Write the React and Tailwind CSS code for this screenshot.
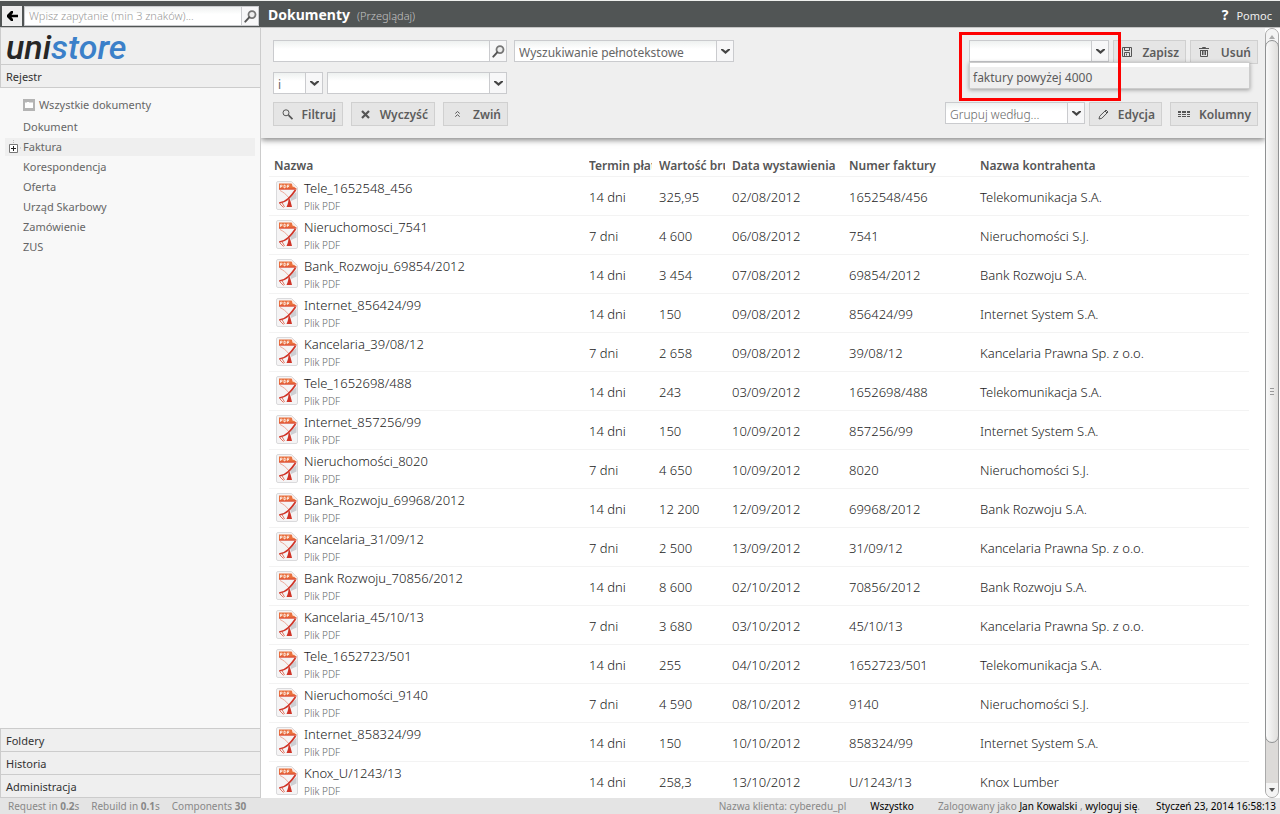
import React from "react";
import clsx from "clsx";

const documents = [
  ["Tele_1652548_456", "14 dni", "325,95", "02/08/2012", "1652548/456", "Telekomunikacja S.A."],
  ["Nieruchomosci_7541", "7 dni", "4 600", "06/08/2012", "7541", "Nieruchomości S.J."],
  ["Bank_Rozwoju_69854/2012", "14 dni", "3 454", "07/08/2012", "69854/2012", "Bank Rozwoju S.A."],
  ["Internet_856424/99", "14 dni", "150", "09/08/2012", "856424/99", "Internet System S.A."],
  ["Kancelaria_39/08/12", "7 dni", "2 658", "09/08/2012", "39/08/12", "Kancelaria Prawna Sp. z o.o."],
  ["Tele_1652698/488", "14 dni", "243", "03/09/2012", "1652698/488", "Telekomunikacja S.A."],
  ["Internet_857256/99", "14 dni", "150", "10/09/2012", "857256/99", "Internet System S.A."],
  ["Nieruchomości_8020", "7 dni", "4 650", "10/09/2012", "8020", "Nieruchomości S.J."],
  ["Bank_Rozwoju_69968/2012", "14 dni", "12 200", "12/09/2012", "69968/2012", "Bank Rozwoju S.A."],
  ["Kancelaria_31/09/12", "7 dni", "2 500", "13/09/2012", "31/09/12", "Kancelaria Prawna Sp. z o.o."],
  ["Bank Rozwoju_70856/2012", "14 dni", "8 600", "02/10/2012", "70856/2012", "Bank Rozwoju S.A."],
  ["Kancelaria_45/10/13", "7 dni", "3 680", "03/10/2012", "45/10/13", "Kancelaria Prawna Sp. z o.o."],
  ["Tele_1652723/501", "14 dni", "255", "04/10/2012", "1652723/501", "Telekomunikacja S.A."],
  ["Nieruchomości_9140", "7 dni", "4 590", "08/10/2012", "9140", "Nieruchomości S.J."],
  ["Internet_858324/99", "14 dni", "150", "10/10/2012", "858324/99", "Internet System S.A."],
  ["Knox_U/1243/13", "14 dni", "258,3", "13/10/2012", "U/1243/13", "Knox Lumber"],
];

const columns = [
  { label: "Nazwa", width: "w-[315px]" },
  { label: "Termin płatności", width: "w-[70px]" },
  { label: "Wartość brutto", width: "w-[73px]" },
  { label: "Data wystawienia", width: "w-[117px]" },
  { label: "Numer faktury", width: "w-[131px]" },
  { label: "Nazwa kontrahenta", width: "" },
];

const registers = ["Dokument", "Faktura", "Korespondencja", "Oferta", "Urząd Skarbowy", "Zamówienie", "ZUS"];

const Magnifier = () => (
  <svg width="13" height="13" viewBox="0 0 13 13" fill="none" aria-hidden="true">
    <circle cx="8" cy="4.6" r="3.5" fill="#eee" stroke="#777" strokeWidth="1.8" />
    <path d="M5.2 7.4 1.3 11.6" stroke="#555" strokeWidth="2" strokeLinecap="round" />
  </svg>
);

const Chevron = () => (
  <svg width="9" height="5" viewBox="0 0 9 5" aria-hidden="true">
    <path d="M0 0h2l2.5 2L7 0h2v1L4.500 5 0 1z" fill="#444" />
  </svg>
);

const FilterIcon = () => (
  <svg width="11" height="11" viewBox="0 0 11 11" fill="none" stroke="#555" aria-hidden="true">
    <circle cx="4" cy="3.8" r="3" />
    <path d="m6.5 6.2 4 4" strokeWidth="1.8" />
  </svg>
);

const ClearIcon = () => (
  <svg width="9" height="9" viewBox="0 0 9 9" stroke="#555" strokeWidth="2.2" aria-hidden="true">
    <path d="m1 1 7 7M8 1 1 8" />
  </svg>
);

const CollapseIcon = () => (
  <svg width="5" height="6" viewBox="0 0 5 6" fill="none" stroke="#555" aria-hidden="true">
    <path d="m.3 2.500 2.200-2 2.200 2M.3 5.700l2.200-2 2.200 2" />
  </svg>
);

const SaveIcon = () => (
  <svg width="10" height="10" viewBox="0 0 10 10" fill="none" stroke="#555" aria-hidden="true">
    <path d="M.5.5h9v9h-9zM2.5.5v3h5v-3M2.5 9.5v-4h5v4M4.5 6.5v2" />
  </svg>
);

const TrashIcon = () => (
  <svg width="10" height="10" viewBox="0 0 10 10" fill="none" stroke="#555" aria-hidden="true">
    <path d="M0 1.5h10M1.5 3.500h7M1.5 3v6.500h7V3M3.5 1V.5h3V1M3.500 4v4M5 4v4M6.500 4v4" />
  </svg>
);

const PencilIcon = () => (
  <svg width="11" height="11" viewBox="0 0 11 11" fill="none" stroke="#555" aria-hidden="true">
    <path d="m1 10 .7-2.800L8 1l2 2-6.200 6.300zM7 2l2 2" />
  </svg>
);

const ColumnsIcon = () => (
  <svg width="12" height="6" viewBox="0 0 12 6" fill="#555" aria-hidden="true">
    <path d="M0 0h3v2H0zM4 0h4v2H4zM9 0h3v2H9zM0 3h3v1H0zM4 3h4v1H4zM9 3h3v1H9zM0 5h3v1H0zM4 5h4v1H4zM9 5h3v1H9z" />
  </svg>
);

const PdfIcon = () => (
  <svg width="22" height="29" viewBox="0 0 22 29" className="shrink-0" aria-hidden="true">
    <path d="M2 .5h13.500l6 6V27a1.500 1.500 0 0 1-1.500 1.500H2A1.500 1.500 0 0 1 .5 27V2A1.500 1.500 0 0 1 2 .5z" fill="#f5f4f5" stroke="#dadadc" />
    <path d="M20.500 11v6.500L15 20l-1-4z" fill="#cdced2" />
    <path d="M3 2.500h12.500l5 5.500H3z" fill="#e9713f" />
    <path d="M3 7.500h17.500v1.200H3z" fill="#dd4a32" />
    <path d="M15.500 1l5.500 6-4.500-1.500z" fill="#fbe9e2" />
    <path d="M4.500 6.800V4.200h1.400q1 .7 0 1.400H4.800M8 4.200v2.600h1q1.600-1.300 0-2.600zM13.300 4.200h-1.900v2.600M11.500 5.500h1.500" fill="none" stroke="#fff" strokeWidth=".8" />
    <path d="M4 9.500c3 1.500 6 3.500 9 7.500" fill="none" stroke="#eda595" strokeWidth="1" />
    <path d="M19.500 9C17.500 12 15 15 12.500 17.500 10 20 6.500 21.500 3.200 22" fill="none" stroke="#d03427" strokeWidth="1.700" />
    <path d="M12.500 16.500c2 2 2.500 6 3.500 9.500h-5.500c1.500-3 2.200-6 2-9.500z" fill="#d03427" />
    <path d="M3.500 22.500l4 4M6 21.500l2.500 4.500" fill="none" stroke="#e2725f" strokeWidth="1" />
  </svg>
);

const FolderIcon = () => (
  <svg width="12" height="12" viewBox="0 0 12 12" aria-hidden="true">
    <path d="M0 0h12v12H0z" fill="#b4b4b4" />
    <path d="M2 3.500h2V3h2v.5h4V9H2z" fill="#fff" />
  </svg>
);

const fieldStyle =
  "w-full appearance-none rounded-none border border-[#cacbce] bg-white bg-linear-to-b from-[#eef1f0] to-white to-40% px-1 text-[#666] placeholder:text-[#999] outline-none";

const endCap =
  "absolute inset-y-0 right-0 flex w-[18px] items-center justify-center border border-[#cacbce] bg-[#f7f7f8]";

const SelectBox = ({ label, className, muted, options }) => (
  <div className={clsx("relative", className)}>
    <select aria-label={label} className={clsx(fieldStyle, "block h-[22px] pt-[3px]", muted && "font-light")}>
      {options.map((option) => (
        <option key={option}>{option}</option>
      ))}
    </select>
    <span className={clsx(endCap, "pointer-events-none h-[22px]")}>
      <Chevron />
    </span>
  </div>
);

const ToolButton = ({ icon, children, className }) => (
  <button
    type="button"
    className={clsx(
      "flex h-6 items-center justify-between border border-[#d0d0d0] bg-[#e5e5e5] pt-0.5 pr-1.5 pl-[7px] font-semibold text-[#5c5c5c]",
      className
    )}
  >
    <span className="flex w-3 justify-center pb-0.5">{icon}</span>
    {children}
  </button>
);

const Header = () => (
  <header className="flex h-7 shrink-0 items-center border-t border-b border-t-[#eef0ee] border-b-[#c4c4c4] bg-[#515555] pt-0.5">
    <div className="flex w-[261px] items-center gap-0.5 px-0.5 pt-0.5">
      <button type="button" aria-label="Wstecz" className="flex h-5 w-5 shrink-0 items-center justify-center bg-[#eee]">
        <svg width="11" height="10" viewBox="0 0 11 10" aria-hidden="true">
          <path d="M4 0h2v2L4.500 3.700H11v2.600H4.500L6 8v2H4L0 6V4z" fill="#000" />
        </svg>
      </button>
      <div className="relative grow">
        <input
          type="text"
          aria-label="Szukaj"
          placeholder="Wpisz zapytanie (min 3 znaków)..."
          className={clsx(fieldStyle, "block h-5 text-[11px] font-light placeholder:text-[#777]")}
        />
        <button type="button" aria-label="Szukaj" className={endCap}>
          <Magnifier />
        </button>
      </div>
    </div>
    <h1 className="pl-[7px] text-sm font-bold text-white">Dokumenty</h1>
    <span className="grow pt-0.5 pl-[7px] text-[11px] font-light text-[#c4c4c4]">(Przeglądaj)</span>
    <a href="#pomoc" className="flex items-center gap-2 pt-0.5 pr-2 text-[11px] text-[#eee]">
      <b className="pb-0.5 text-sm text-white">?</b>
      Pomoc
    </a>
  </header>
);

const Section = ({ children }) => (
  <button type="button" className="h-[23px] shrink-0 border-b border-l border-[#ccc] bg-[#efefef] pt-0.5 pl-[5px] text-left text-[11px] text-[#333]">
    {children}
  </button>
);

const Sidebar = () => (
  <aside className="flex w-[261px] shrink-0 flex-col border-r border-[#ccc] bg-[#f8f8f8]">
    <div className="flex h-[37px] shrink-0 items-center border-b border-l border-[#ccc] bg-[#efefef] pt-0.5 pl-[5px] font-['Roboto'] text-[34px] leading-9 font-medium text-[#262626] italic">
      uni<span className="text-[#3b80c9]">store</span>
    </div>
    <Section>Rejestr</Section>
    <nav className="grow px-[5px] pt-[7px] text-[11px] text-[#666]">
      <a href="#wszystkie" className="flex h-[22px] items-center gap-1 pb-0.5 pl-[18px]">
        <FolderIcon />
        Wszystkie dokumenty
      </a>
      <ul>
        {registers.map((name) => (
          <li key={name} className="flex h-5 items-center">
            <a
              href={`#${name}`}
              className={clsx("flex h-[18px] w-full items-center", name === "Faktura" ? "bg-[#efefef] pl-1" : "pl-[18px]")}
            >
              {name === "Faktura" && (
                <svg width="14" height="15" viewBox="0 0 14 15" aria-hidden="true">
                  <path d="M4.500 0v1M4.500 2v1M11 8h1" stroke="#bbb" />
                  <path d="M.5 4.500h8v8h-8z" fill="#fff" stroke="#777" />
                  <path d="M2 8.500h5M4.500 6v5" stroke="#222" />
                </svg>
              )}
              {name}
            </a>
          </li>
        ))}
      </ul>
    </nav>
    <div className="flex flex-col border-t border-[#ccc]">
      <Section>Foldery</Section>
      <Section>Historia</Section>
      <Section>Administracja</Section>
    </div>
  </aside>
);

const SavedFilter = () => (
  <div className="relative w-[140px]">
    <input type="text" aria-label="Zapisany filtr" className={clsx(fieldStyle, "block h-[22px]")} />
    <button type="button" aria-label="Rozwiń" className={clsx(endCap, "h-[22px]")}>
      <Chevron />
    </button>
    <ul
      role="listbox"
      aria-label="Zapisane filtry"
      className="absolute top-[22px] left-0 z-10 w-[281px] border border-[#ccc] bg-white pt-1 shadow-[0_1px_4px_rgba(0,0,0,0.35)]"
    >
      <li role="option" aria-selected="true" className="h-[21px] bg-[#efefef] px-[3px] leading-[22px]">
        faktury powyżej 4000
      </li>
    </ul>
    <div className="pointer-events-none absolute -top-2 -left-2.5 z-20 h-[69px] w-[162px] border-3 border-[#fe0000]" />
  </div>
);

const Toolbar = () => (
  <section className="z-10 flex shrink-0 justify-between bg-[#efefef] py-3 pr-[7px] pl-3 text-xs shadow-[0_2px_6px_rgba(0,0,0,0.5)]">
    <div>
      <div className="flex gap-[7px]">
        <div className="relative w-[234px]">
          <input type="text" aria-label="Filtr" className={clsx(fieldStyle, "block h-[22px]")} />
          <button type="button" aria-label="Filtruj tekst" className={endCap}>
            <Magnifier />
          </button>
        </div>
        <SelectBox label="Rodzaj wyszukiwania" className="w-[220px]" options={["Wyszukiwanie pełnotekstowe"]} />
      </div>
      <div className="mt-2.5 flex gap-1">
        <SelectBox label="Operator" className="w-[50px]" options={["i", "lub"]} />
        <SelectBox label="Pole" className="w-[180px]" options={[""]} />
      </div>
      <div className="mt-2 flex gap-2">
        <ToolButton icon={<FilterIcon />} className="w-[70px]">Filtruj</ToolButton>
        <ToolButton icon={<ClearIcon />} className="w-[84px]">Wyczyść</ToolButton>
        <ToolButton icon={<CollapseIcon />} className="w-[65px]">Zwiń</ToolButton>
      </div>
    </div>
    <div className="flex flex-col items-end justify-between">
      <div className="flex gap-1">
        <SavedFilter />
        <ToolButton icon={<SaveIcon />} className="w-[73px]">Zapisz</ToolButton>
        <ToolButton icon={<TrashIcon />} className="w-[68px]">Usuń</ToolButton>
      </div>
      <div className="flex gap-1">
        <SelectBox label="Grupowanie" className="w-[140px]" muted options={["Grupuj według..."]} />
        <ToolButton icon={<PencilIcon />} className="mr-1 w-[73px]">Edycja</ToolButton>
        <ToolButton icon={<ColumnsIcon />} className="w-[88px]">Kolumny</ToolButton>
      </div>
    </div>
  </section>
);

const DocumentTable = () => (
  <div className="min-h-0 grow overflow-hidden bg-white pt-4 pr-4 pl-2">
    <table className="w-full table-fixed border-collapse text-left">
      <thead>
        <tr className="h-[22px] border-b border-[#f3f3f3]">
          {columns.map(({ label, width }) => (
            <th key={label} className={clsx("pt-0.5 pr-0.5 pl-[5px] text-xs leading-5 font-semibold text-[#555]", width)}>
              <div className="overflow-hidden whitespace-nowrap">{label}</div>
            </th>
          ))}
        </tr>
      </thead>
      <tbody className="font-light text-[#222]">
        {documents.map(([name, ...cells]) => (
          <tr key={name} className="h-[39px] border-b border-[#f3f3f3]">
            <td className="pt-[3px] pl-[7px]">
              <div className="flex items-start gap-1.5">
                <PdfIcon />
                <div className="-mt-[3px]">
                  <a href={`#${name}`} className="block leading-5">{name}</a>
                  <div className="text-[10px] leading-4 text-[#666]">Plik PDF</div>
                </div>
              </div>
            </td>
            {cells.map((cell, i) => (
              <td key={i} className="pt-0.5 pl-[5px] whitespace-nowrap">{cell}</td>
            ))}
          </tr>
        ))}
      </tbody>
    </table>
  </div>
);

const Scrollbar = () => (
  <div aria-hidden="true" className="mr-px flex w-3.5 shrink-0 flex-col rounded-t-lg rounded-b-lg border border-[#aaa] bg-[#dcdad8]">
    <div className="flex h-[15px] shrink-0 items-center justify-center rounded-t-lg bg-[#f4f4f4]">
      <svg width="6" height="4" viewBox="0 0 6 4"><path d="m0 4 3-4 3 4z" fill="#aaa" /></svg>
    </div>
    <div className="-mx-px -mt-1 flex grow flex-col items-center justify-center gap-0.5 rounded-full border border-[#8f9192] bg-linear-to-r from-[#fafafa] to-[#dfdedc]">
      <i className="h-px w-1 bg-[#999]" />
      <i className="h-px w-1 bg-[#999]" />
      <i className="h-px w-1 bg-[#999]" />
    </div>
    <div className="h-10 shrink-0 rounded-b-lg" />
    <div className="flex h-3.5 shrink-0 items-center justify-center rounded-b-lg bg-[#f4f4f4]">
      <svg width="6" height="4" viewBox="0 0 6 4"><path d="m0 0 3 4 3-4z" fill="#555" /></svg>
    </div>
  </div>
);

const Footer = () => (
  <footer className="flex h-4 shrink-0 justify-between bg-[#e4e4e4] pr-1 pl-2 text-[10px] leading-4 text-[#888]">
    <div className="flex gap-3">
      <span>Request in <b>0.2</b>s</span>
      <span>Rebuild in <b>0.1</b>s</span>
      <span>Components <b>30</b></span>
    </div>
    <div className="flex">
      <span>Nazwa klienta: cyberedu_pl</span>
      <a href="#wszystko" className="ml-6 text-black">Wszystko</a>
      <span className="ml-6">
        Zalogowany jako <span className="text-black">Jan Kowalski</span> ,{" "}
        <a href="#wyloguj" className="text-black">wyloguj się</a>.
      </span>
      <time className="ml-4 text-black">Styczeń 23, 2014 16:58:13</time>
    </div>
  </footer>
);

const App = () => {
  return (
    <div className="flex h-screen flex-col overflow-hidden bg-white font-['Noto_Sans','Open_Sans',sans-serif] text-[13px] leading-5 text-[#5c5c5c]">
      <Header />
      <div className="flex min-h-0 grow">
        <Sidebar />
        <main className="flex min-w-0 grow flex-col overflow-hidden">
          <Toolbar />
          <DocumentTable />
        </main>
        <Scrollbar />
      </div>
      <Footer />
    </div>
  );
};

export default App;
